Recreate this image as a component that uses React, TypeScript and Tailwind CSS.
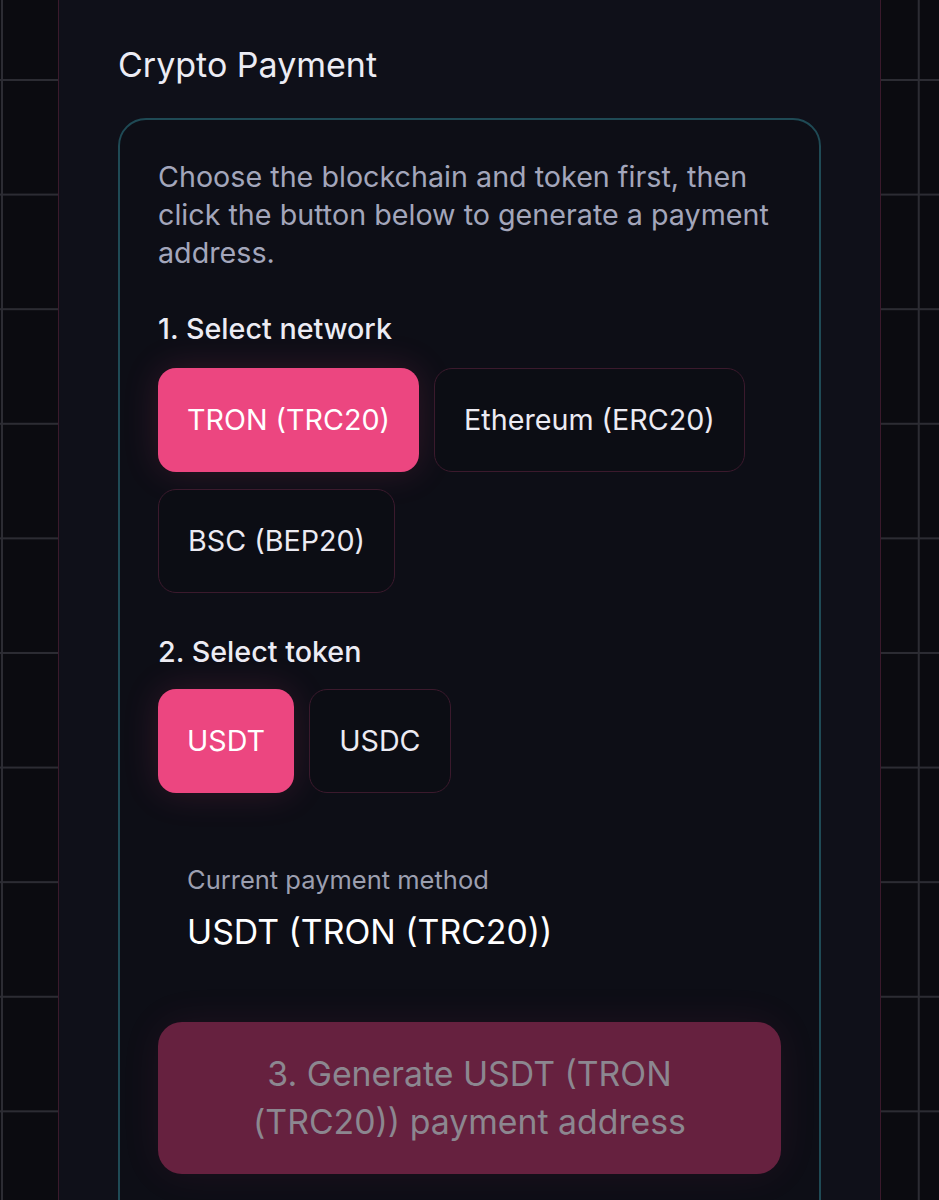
import { useState } from "react";

const networks = ["TRON (TRC20)", "Ethereum (ERC20)", "BSC (BEP20)"];
const tokens = ["USDT", "USDC"];

function Choice({
  label,
  active,
  onClick,
}: {
  label: string;
  active: boolean;
  onClick: () => void;
}) {
  return (
    <button
      type="button"
      onClick={onClick}
      className={
        active
          ? "h-[104px] px-[29px] rounded-[18px] bg-[#ec4680] text-white text-[28.7px] shadow-[0_0_36px_rgba(236,70,128,0.16)]"
          : "h-[104px] px-[29px] rounded-[18px] bg-[#0c0d14] border border-[#3b1a2d] text-[#ecebf3] text-[28.7px]"
      }
    >
      {label}
    </button>
  );
}

export default function App() {
  const [network, setNetwork] = useState(networks[0]);
  const [token, setToken] = useState(tokens[0]);
  const method = `${token} (${network})`;

  return (
    <div className="min-h-screen h-[1200px] overflow-hidden flex bg-[#0b0b10] bg-[linear-gradient(#2c2c33_2px,transparent_2px),linear-gradient(90deg,#2c2c33_2px,transparent_2px)] bg-[size:114.6px_114.6px] bg-[position:1px_79px] font-['Inter',sans-serif]">
      <div className="ml-[58px] w-[823px] shrink-0 bg-[#0f1019] border-x border-[#3b1a2c] px-[59px] pt-[45px]">
        {/* Title */}
        <h1 className="text-[34px] leading-[40px] text-[#ececf4]">Crypto Payment</h1>

        {/* Card */}
        <div className="mt-[33px] rounded-[28px] border-2 border-[#1f4a55] bg-[#0d0e16] px-[38px] pt-[38px] pb-[60px]">
          <p className="text-[28.7px] leading-[38px] text-[#a3a6bb]">
            Choose the blockchain and token first, then click the button below to generate a payment address.
          </p>

          <h2 className="mt-[39px] text-[28.7px] leading-[36px] font-medium text-[#ececf4]">1. Select network</h2>
          <div className="mt-[21px] flex flex-wrap gap-x-[15px] gap-y-[17px]">
            {networks.map((n) => (
              <Choice key={n} label={n} active={n === network} onClick={() => setNetwork(n)} />
            ))}
          </div>

          <h2 className="mt-[41px] text-[28.7px] leading-[36px] font-medium text-[#ececf4]">2. Select token</h2>
          <div className="mt-[19px] flex flex-wrap gap-[15px]">
            {tokens.map((t) => (
              <Choice key={t} label={t} active={t === token} onClick={() => setToken(t)} />
            ))}
          </div>

          {/* Current method */}
          <div className="mt-[71px] px-[29px]">
            <p className="text-[25.5px] leading-[32px] text-[#9c9fb0]">Current payment method</p>
            <p className="mt-[16px] text-[33.8px] leading-[40px] text-white">{method}</p>
          </div>

          <button
            type="button"
            disabled
            className="mt-[70px] w-full rounded-[24px] bg-[#66213f] px-[66px] py-[28px] text-[33.8px] leading-[48px] text-[#8c8790] shadow-[0_0_40px_rgba(236,70,128,0.08)]"
          >
            3. Generate {method} payment address
          </button>
        </div>
      </div>
    </div>
  );
}
